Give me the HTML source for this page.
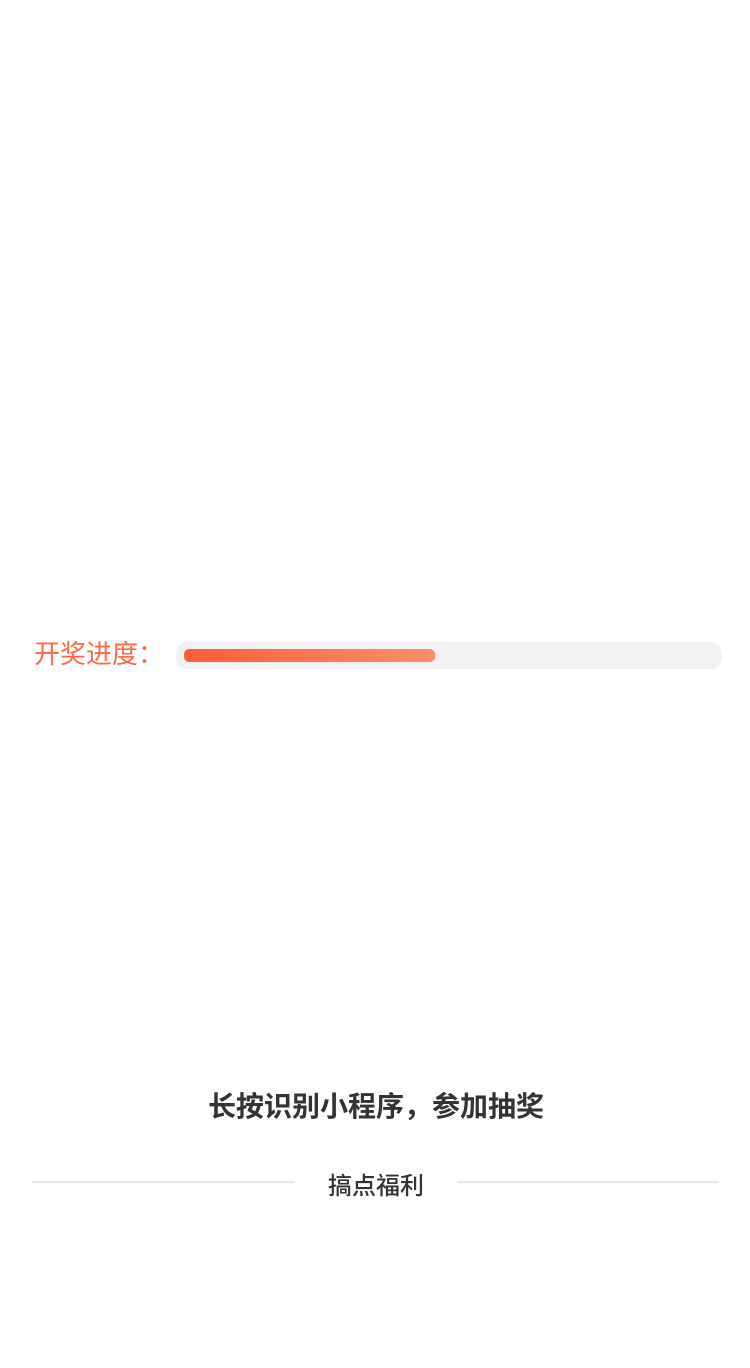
<!DOCTYPE html>
<html><head><meta charset="utf-8"><style>
html,body{margin:0;padding:0;width:750px;height:1368px;background:#fff;overflow:hidden;}
body{position:relative;font-family:"Liberation Sans","Noto Sans CJK SC",sans-serif;}
.lbl{position:absolute;left:34px;top:636px;font-size:26px;line-height:36px;color:#fa6a45;}
.track{position:absolute;left:176px;top:642px;width:546px;height:27px;background:#f2f2f5;border-radius:12px;}
.fill{position:absolute;left:184px;top:649px;width:251px;height:13px;border-radius:5px;background:linear-gradient(90deg,#fa5e3a,#fe8f6d);}
.t{position:absolute;left:0;width:752px;text-align:center;top:1087px;font-size:28px;line-height:40px;font-weight:bold;color:#333;}
.s{position:absolute;left:0;width:752px;text-align:center;top:1170px;font-size:24px;line-height:34px;font-weight:500;color:#333;}
.ln{position:absolute;top:1181px;height:2px;background:#e6e6e6;}
</style></head><body>
<div class="lbl">开奖进度：</div>
<div class="track"></div>
<div class="fill"></div>
<div class="t">长按识别小程序，参加抽奖</div>
<div class="ln" style="left:32px;width:263px"></div>
<div class="ln" style="left:457px;width:262px"></div>
<div class="s">搞点福利</div>
</body></html>
